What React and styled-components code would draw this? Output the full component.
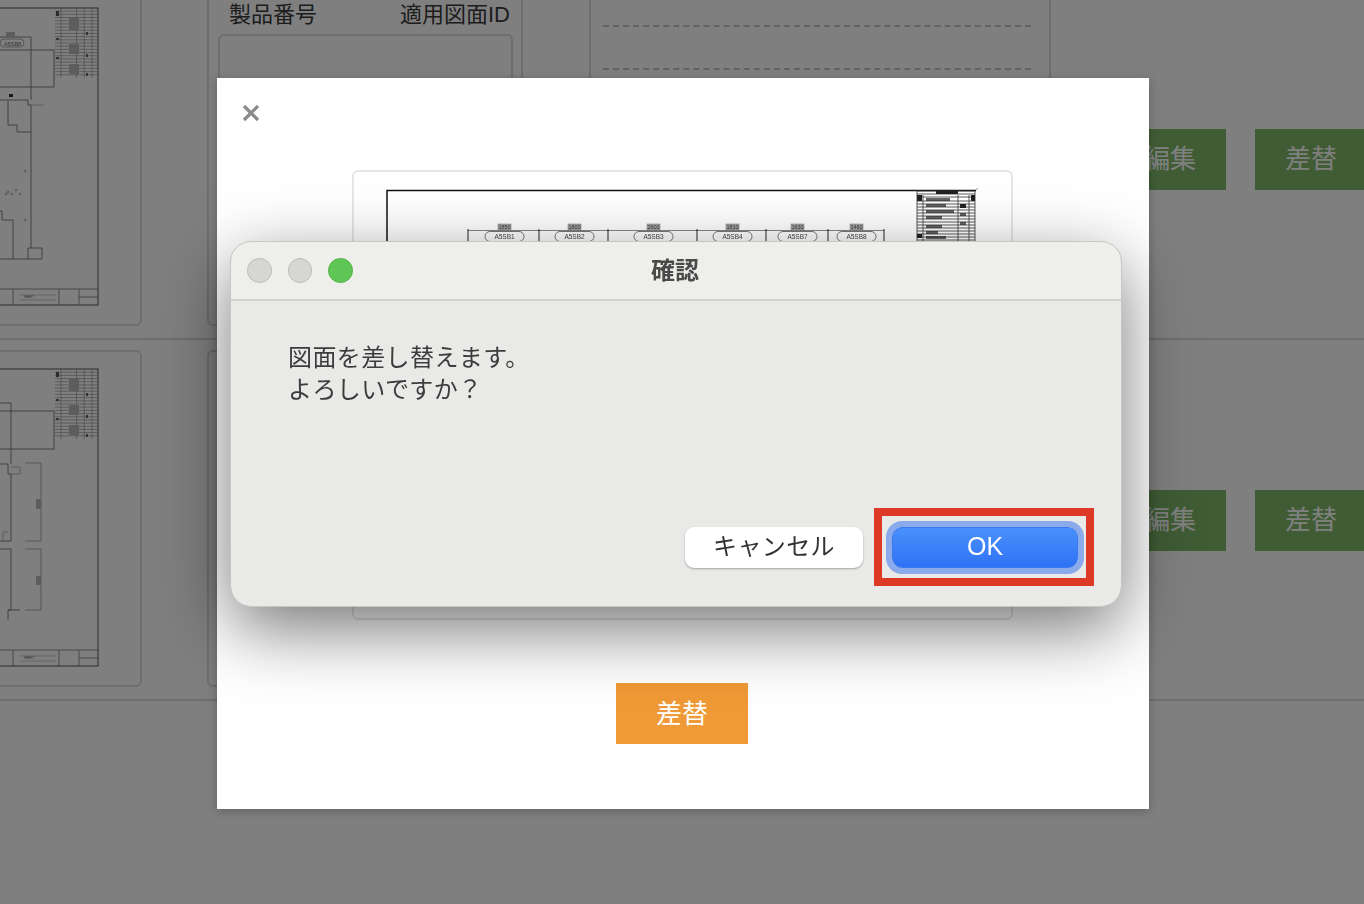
import React from 'react'
import styled, { createGlobalStyle } from 'styled-components'

const FONT = `"Liberation Sans", "Noto Sans CJK JP", sans-serif`

const rows = [{ id: 1, variant: 'top' }, { id: 2, variant: 'bottom' }]

const sections = [
  { name: 'A5SB1', size: '1850', cx: 504.5, from: 468 },
  { name: 'A5SB2', size: '1800', cx: 574.5, from: 539 },
  { name: 'A5SB3', size: '2600', cx: 653.5, from: 608 },
  { name: 'A5SB4', size: '1810', cx: 732.5, from: 697 },
  { name: 'A5SB7', size: '1630', cx: 797.5, from: 766 },
  { name: 'A5SB8', size: '1460', cx: 856.5, from: 828 },
]

export default function App() {
  return (
    <>
      <GlobalStyle />
      <Page>
        {rows.map((row) => (
          <Row key={row.id}>
            <DrawingCard>
              <Thumb variant={row.variant} />
            </DrawingCard>
            <InfoCard>
              <LabelRow>
                <span>製品番号</span>
                <span>適用図面ID</span>
              </LabelRow>
              <InfoInput />
            </InfoCard>
            <NoteCard>
              <NoteLine />
              <NoteLine />
            </NoteCard>
            <Actions>
              <GreenButton>編集</GreenButton>
              <GreenButton>差替</GreenButton>
            </Actions>
          </Row>
        ))}
      </Page>

      <Overlay>
        <Modal>
          <CloseButton>
            <svg width="18" height="18" viewBox="0 0 18 18">
              <path d="M2 2 L16 16 M16 2 L2 16" stroke="#8a8a8a" strokeWidth="3.2" fill="none" />
            </svg>
          </CloseButton>
          <PreviewCard>
            <PreviewDrawing />
          </PreviewCard>
          <OrangeButton>差替</OrangeButton>

          <Dialog>
            <DialogHeader>
              <Lights>
                <Light />
                <Light />
                <Light $active />
              </Lights>
              <DialogTitle>確認</DialogTitle>
            </DialogHeader>
            <DialogBody>
              <Message>
                図面を差し替えます。
                <br />
                よろしいですか？
              </Message>
              <DialogFooter>
                <CancelButton>キャンセル</CancelButton>
                <RedFrame>
                  <OkButton>OK</OkButton>
                </RedFrame>
              </DialogFooter>
            </DialogBody>
          </Dialog>
        </Modal>
      </Overlay>
    </>
  )
}

function TitleBlock({ x, y, w, h }) {
  const lines = []
  for (let i = 1; i < 22; i++) {
    lines.push(<line key={i} x1={x} x2={x + w} y1={y + (i * h) / 22} y2={y + (i * h) / 22} />)
  }
  const cols = [0.14, 0.5, 0.68, 0.86]
  return (
    <g stroke="#8a8a8a" strokeWidth="0.6" fill="none">
      {lines}
      {cols.map((c) => (
        <line key={c} x1={x + w * c} x2={x + w * c} y1={y} y2={y + h} />
      ))}
      <rect x={x + 1} y={y + 3} width="3" height="5" fill="#555" stroke="none" />
      <rect x={x + 1} y={y + 30} width="3" height="2" fill="#666" stroke="none" />
      <rect x={x + 1} y={y + 49} width="3" height="2" fill="#666" stroke="none" />
      <rect x={x + 14} y={y + 10} width="10" height="12" fill="#bbb" stroke="none" />
      <rect x={x + 14} y={y + 36} width="10" height="10" fill="#bbb" stroke="none" />
      <rect x={x + 14} y={y + 56} width="10" height="10" fill="#bbb" stroke="none" />
      <rect x={x + 31} y={y + 24} width="2" height="3" fill="#666" stroke="none" />
      <rect x={x + 31} y={y + 46} width="2" height="3" fill="#666" stroke="none" />
      <rect x={x + 31} y={y + 65} width="2" height="3" fill="#666" stroke="none" />
    </g>
  )
}

function Thumb({ variant }) {
  return (
    <ThumbSvg viewBox="-142 0 242 302">
      <rect x="-130" y="2" width="228" height="297" fill="none" stroke="#555" strokeWidth="1" />
      <TitleBlock x={55} y={2} w={43} h={70} />
      <g stroke="#777" strokeWidth="0.8" fill="none">
        <path d="M-130 283 H98 M13 283 V299 M59 283 V299 M79 283 V299 M79 291 H98" />
        <path d="M20 289 H56 M20 294 H56" strokeWidth="0.4" />
        <text x="24" y="292" fontSize="3" fill="#555" stroke="none" fontFamily="Liberation Sans">SHEET</text>
      </g>
      {variant === 'top' ? (
        <g stroke="#777" strokeWidth="0.9" fill="none">
          <rect x="-60" y="44" width="114" height="37" />
          <path d="M0 31 H31 V94 M-60 94 H28 V99 H31 V242 H28 V253 H-60" />
          <path d="M8 95 V119 H17 V126 H31" />
          <path d="M13 214 V253 M-60 205 H2 V214 H13 M31 242 H42 V253 H28" />
          <rect x="0" y="33" width="24" height="8" rx="4" strokeWidth="0.6" />
          <text x="4" y="39.5" fontSize="5.5" fill="#666" stroke="none" fontFamily="Liberation Sans">A5SB8</text>
          <rect x="6" y="26" width="9" height="5" fill="#bbb" stroke="none" />
          <rect x="9" y="88" width="4" height="3" fill="#333" stroke="none" />
          <path d="M31 99 H44" strokeWidth="0.5" />
          <circle cx="25" cy="165" r="1" strokeWidth="0.5" />
          <circle cx="25" cy="214" r="1" strokeWidth="0.5" />
          <circle cx="8" cy="186" r="1" strokeWidth="0.5" />
          <circle cx="12" cy="188" r="1" strokeWidth="0.5" />
          <circle cx="16" cy="184" r="1" strokeWidth="0.5" />
          <circle cx="20" cy="188" r="1" strokeWidth="0.5" />
          <circle cx="6" cy="188" r="1" strokeWidth="0.5" />
        </g>
      ) : (
        <g stroke="#777" strokeWidth="0.9" fill="none">
          <rect x="-60" y="44" width="114" height="38" />
          <path d="M-60 36 H11 V97 M-60 97 H8 V107 H11 V174 H-60" />
          <path d="M-60 182 H11 V243 H8 V253 M8 243 H20" />
          <path d="M25 96 H41 V174 H25 M25 182 H41 V243 H25" strokeWidth="0.6" />
          <rect x="36" y="132" width="5" height="10" fill="#bbb" stroke="none" />
          <rect x="36" y="209" width="5" height="9" fill="#bbb" stroke="none" />
          <path d="M11 100 H20 V107 H11" strokeWidth="0.5" />
          <path d="M3 174 V165 H8" strokeWidth="0.5" />
        </g>
      )}
    </ThumbSvg>
  )
}

function PreviewDrawing() {
  return (
    <PreviewSvg viewBox="352 170 661 90">
      <path d="M387 260 V190.5 H976" fill="none" stroke="#111" strokeWidth="1.5" />
      <path d="M468 230.5 H884" fill="none" stroke="#666" strokeWidth="0.8" />
      <g stroke="#222" strokeWidth="1" fill="none">
        {sections.map((s) => (
          <line key={s.from} x1={s.from} x2={s.from} y1="229" y2="244" />
        ))}
        <line x1="884" x2="884" y1="229" y2="244" />
      </g>
      {sections.map((s) => (
        <g key={s.name}>
          <rect x={s.cx - 6.5} y="224" width="13" height="6" fill="#aaa" stroke="#777" strokeWidth="0.5" />
          <text x={s.cx} y="229" textAnchor="middle" fontSize="5.5" fill="#333" fontFamily="Liberation Sans">
            {s.size}
          </text>
          <rect x={s.cx - 19.5} y="231.5" width="39" height="10" rx="5" fill="#fff" stroke="#555" strokeWidth="0.8" />
          <text x={s.cx} y="239" textAnchor="middle" fontSize="6.5" fill="#444" fontFamily="Liberation Sans">
            {s.name}
          </text>
        </g>
      ))}
      <g stroke="#333" strokeWidth="0.8" fill="none">
        <rect x="917" y="191" width="58" height="55" />
        {[194, 197, 201, 204, 207, 210, 213, 216, 219, 222, 225, 228, 231, 234, 237, 240].map((y) => (
          <line key={y} x1="917" x2="975" y1={y} y2={y} />
        ))}
        <line x1="923" x2="923" y1="195" y2="246" />
        <line x1="958" x2="958" y1="195" y2="246" />
        <line x1="969" x2="969" y1="195" y2="246" />
        <path d="M975 191 L978 188" strokeWidth="0.5" />
      </g>
      <g fill="#222">
        <rect x="936" y="191" width="22" height="3" />
        <rect x="917" y="195" width="5" height="6" />
        <rect x="971" y="195" width="4" height="6" />
        <rect x="926" y="198" width="24" height="3" opacity="0.7" />
        <rect x="926" y="204" width="20" height="3" opacity="0.7" />
        <rect x="926" y="210" width="28" height="3" opacity="0.7" />
        <rect x="926" y="216" width="16" height="3" opacity="0.7" />
        <rect x="926" y="225" width="16" height="3" opacity="0.7" />
        <rect x="926" y="231" width="12" height="3" opacity="0.7" />
        <rect x="960" y="204" width="6" height="4" />
        <rect x="960" y="213" width="6" height="3" opacity="0.7" />
        <rect x="960" y="222" width="6" height="3" opacity="0.7" />
        <rect x="917" y="234" width="5" height="4" />
        <rect x="926" y="236" width="20" height="3" opacity="0.7" />
      </g>
    </PreviewSvg>
  )
}

const GlobalStyle = createGlobalStyle`
  html, body {
    margin: 0;
    height: 100%;
    overflow: hidden;
    background: #fff;
    font-family: ${FONT};
  }
`

const Page = styled.div`
  margin: -21px 0 0 -179px;
  width: 1570px;
`

const Row = styled.div`
  box-sizing: border-box;
  height: 361px;
  display: flex;
  align-items: flex-start;
  padding-top: 10px;
  border-bottom: 2px solid #dcdcdc;
`

const DrawingCard = styled.div`
  box-sizing: border-box;
  width: 321px;
  height: 337px;
  padding: 17px 40px 0 0;
  display: flex;
  justify-content: flex-end;
  border: 2px solid #dcdcdc;
  border-left: 0;
  border-radius: 6px;
`

const ThumbSvg = styled.svg`
  display: block;
  width: 242px;
  height: 302px;
  margin-top: -2px;
  filter: blur(0.5px);
`

const InfoCard = styled.div`
  box-sizing: border-box;
  width: 316px;
  height: 337px;
  margin-left: 65px;
  padding: 9px 8px 0 9px;
  border: 2px solid #dcdcdc;
  border-radius: 6px;
`

const LabelRow = styled.div`
  display: flex;
  justify-content: space-between;
  padding: 0 3px 0 11px;
  font-size: 22px;
  line-height: 30px;
  color: #3a3a3a;
`

const InfoInput = styled.div`
  box-sizing: border-box;
  height: 120px;
  margin-top: 4px;
  border: 2px solid #dcdcdc;
  border-radius: 6px;
`

const NoteCard = styled.div`
  box-sizing: border-box;
  width: 462px;
  height: 337px;
  margin-left: 66px;
  padding: 0 18px 0 12px;
  border: 2px solid #dcdcdc;
  border-radius: 6px;
`

const NoteLine = styled.div`
  height: 36px;
  border-bottom: 2px dashed #c4c4c4;
  box-sizing: border-box;

  & + & {
    height: 43px;
  }
`

const Actions = styled.div`
  display: flex;
  gap: 29px;
  margin: 140px 0 0 63px;
`

const GreenButton = styled.div`
  box-sizing: border-box;
  width: 112px;
  height: 61px;
  padding-bottom: 6px;
  display: flex;
  align-items: center;
  justify-content: center;
  background: #7eb96a;
  color: #fff;
  font-size: 26px;
`

const Overlay = styled.div`
  position: fixed;
  inset: 0;
  background: rgba(0, 0, 0, 0.5);
`

const Modal = styled.div`
  position: absolute;
  left: 217px;
  top: 78px;
  box-sizing: border-box;
  width: 932px;
  height: 731px;
  padding: 92px 2px 0 0;
  display: flex;
  flex-direction: column;
  align-items: center;
  background: #fff;
  box-shadow: 0 2px 10px rgba(0, 0, 0, 0.25);
`

const CloseButton = styled.div`
  position: absolute;
  left: 25px;
  top: 26px;
  width: 18px;
  height: 18px;
`

const PreviewCard = styled.div`
  box-sizing: border-box;
  flex: none;
  width: 661px;
  height: 450px;
  margin-left: 1px;
  border: 2px solid #e6e6e6;
  border-radius: 6px;
  overflow: hidden;
`

const PreviewSvg = styled.svg`
  display: block;
  width: 661px;
  height: 90px;
  margin: -2px;
  filter: blur(0.3px);
`

const OrangeButton = styled.div`
  box-sizing: border-box;
  width: 132px;
  height: 61px;
  margin-top: 63px;
  padding-bottom: 5px;
  display: flex;
  align-items: center;
  justify-content: center;
  background: #ef9a36;
  color: #fff;
  font-size: 26px;
`

const Dialog = styled.div`
  position: absolute;
  left: 14px;
  top: 164px;
  box-sizing: border-box;
  width: 890px;
  height: 364px;
  display: flex;
  flex-direction: column;
  border-radius: 20px;
  overflow: hidden;
  background: #e9e9e7;
  outline: 1px solid #c6c6c4;
  box-shadow: 0 22px 70px rgba(0, 0, 0, 0.55);
`

const DialogHeader = styled.div`
  box-sizing: border-box;
  height: 59px;
  flex: none;
  display: grid;
  grid-template-columns: 1fr auto 1fr;
  align-items: center;
  padding: 0 16px;
  background: #eeeeea;
  border-bottom: 2px solid #d2d2ce;
`

const Lights = styled.div`
  display: flex;
  gap: 16px;
`

const Light = styled.span`
  box-sizing: border-box;
  width: 24.5px;
  height: 24.5px;
  border-radius: 50%;
  background: ${(p) => (p.$active ? '#5fc554' : '#d6d6d2')};
  border: 1px solid ${(p) => (p.$active ? '#56b44c' : '#bcbcb8')};
`

const DialogTitle = styled.div`
  padding: 0 2px 5px 0;
  font-size: 24px;
  font-weight: 700;
  color: #4a4a4a;
`

const DialogBody = styled.div`
  flex: 1;
  display: flex;
  flex-direction: column;
  justify-content: space-between;
  padding: 41px 27px 20px 58px;
`

const Message = styled.div`
  font-size: 24px;
  line-height: 32px;
  letter-spacing: 0.4px;
  color: #3c3c3c;
  margin-left: -1px;
`

const DialogFooter = styled.div`
  display: flex;
  align-items: center;
  justify-content: flex-end;
  gap: 11px;
`

const CancelButton = styled.div`
  box-sizing: border-box;
  width: 178px;
  height: 41px;
  padding-bottom: 5px;
  display: flex;
  align-items: center;
  justify-content: center;
  background: #fff;
  border-radius: 9px;
  box-shadow: 0 1px 2px rgba(0, 0, 0, 0.3);
  color: #333;
  font-size: 24px;
  letter-spacing: 0.4px;
`

const RedFrame = styled.div`
  box-sizing: border-box;
  width: 220px;
  height: 78px;
  padding: 11px 8px 11px 10px;
  border: 8px solid #dc3a26;
`

const OkButton = styled.div`
  box-sizing: border-box;
  width: 186px;
  height: 41px;
  padding-bottom: 2px;
  display: flex;
  align-items: center;
  justify-content: center;
  border-radius: 10px;
  border: 1px solid #3a78ee;
  background: linear-gradient(#4a90fa, #2f72f6);
  box-shadow: 0 0 0 6px #8aaaec;
  color: #fff;
  font-size: 25px;
`
